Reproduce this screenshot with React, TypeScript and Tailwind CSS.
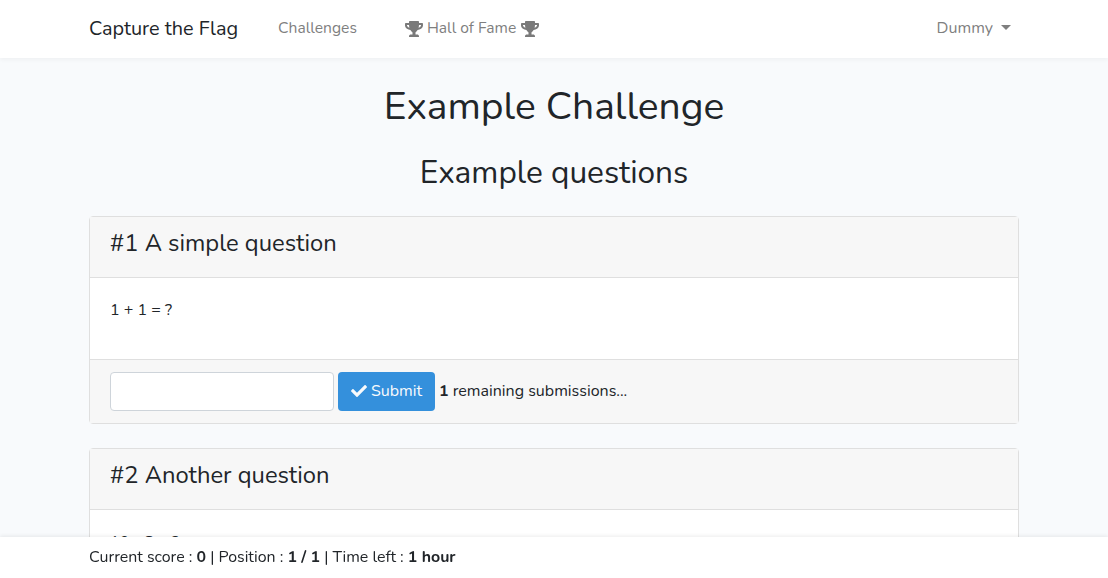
import { FaCheck, FaTrophy } from "react-icons/fa";

const font = "font-['Nunito','Lato','Noto_Sans',sans-serif]";

function QuestionCard({ title, body }: { title: string; body: string }) {
  return (
    <div className="mb-6 rounded border border-[#dfdfdf] bg-white">
      <div className="h-[61px] border-b border-[#dfdfdf] bg-[#f7f7f7] px-5 pt-3 text-[23.75px] leading-[29px]">
        {title}
      </div>
      <div className="h-[81px] px-5 pt-[21px] text-base leading-[22px]">{body}</div>
      <div className="flex h-[64px] items-center gap-1 border-t border-[#dfdfdf] bg-[#f7f7f7] px-5 text-base">
        <input className="h-[39px] w-[224px] rounded border border-[#ced4da] bg-white" />
        <button className="flex h-[39px] w-[97px] items-center justify-center gap-1 rounded bg-[#3490dc] pb-[2px] text-[#f8fafc]">
          <FaCheck className="text-base" />
          Submit
        </button>
        <span className="mb-[2px]">
          <b>1</b> remaining submissions...
        </span>
      </div>
    </div>
  );
}

export default function App() {
  return (
    <div className={`${font} h-screen overflow-hidden bg-[#f8fafc] text-[#212529]`}>
      <nav className="flex h-[58px] items-center bg-white pl-[89px] pr-[97px] shadow-[0_2px_4px_rgba(0,0,0,0.04)]">
        <a className="text-[19.85px]">Capture the Flag</a>
        <a className="ml-10 text-[15.6px] text-[#7f7f7f]">Challenges</a>
        <a className="ml-12 flex items-center text-[15.6px] text-[#7f7f7f]">
          <FaTrophy className="mr-1 text-[18px] text-[#7a7a7a]" />
          Hall of Fame
          <FaTrophy className="ml-[5px] text-[18px] text-[#7a7a7a]" />
        </a>
        <a className="ml-auto flex items-center gap-2 text-base text-[#7f7f7f]">
          <span className="mb-[2px]">Dummy</span>
          <span className="mb-[3px] border-x-[5px] border-t-[5px] border-x-transparent border-t-[#7f7f7f]" />
        </a>
      </nav>
      <main className="px-[89px]">
        <h1 className="mt-[26px] mb-[25px] text-center text-[39px] leading-[46px]">Example Challenge</h1>
        <h2 className="mb-[25px] text-center text-[31.6px] leading-9">Example questions</h2>
        <QuestionCard title="#1 A simple question" body="1 + 1 = ?" />
        <QuestionCard title="#2 Another question" body="10 - 8 = ?" />
      </main>
      <footer className="fixed inset-x-0 bottom-0 h-[41px] bg-white pl-[89px] pt-[9px] text-[15.92px] leading-[22px] shadow-[0_-1px_4px_rgba(0,0,0,0.08)]">
        Current score : <b>0</b> | Position : <b>1 / 1</b> | Time left : <b>1 hour</b>
      </footer>
    </div>
  );
}
